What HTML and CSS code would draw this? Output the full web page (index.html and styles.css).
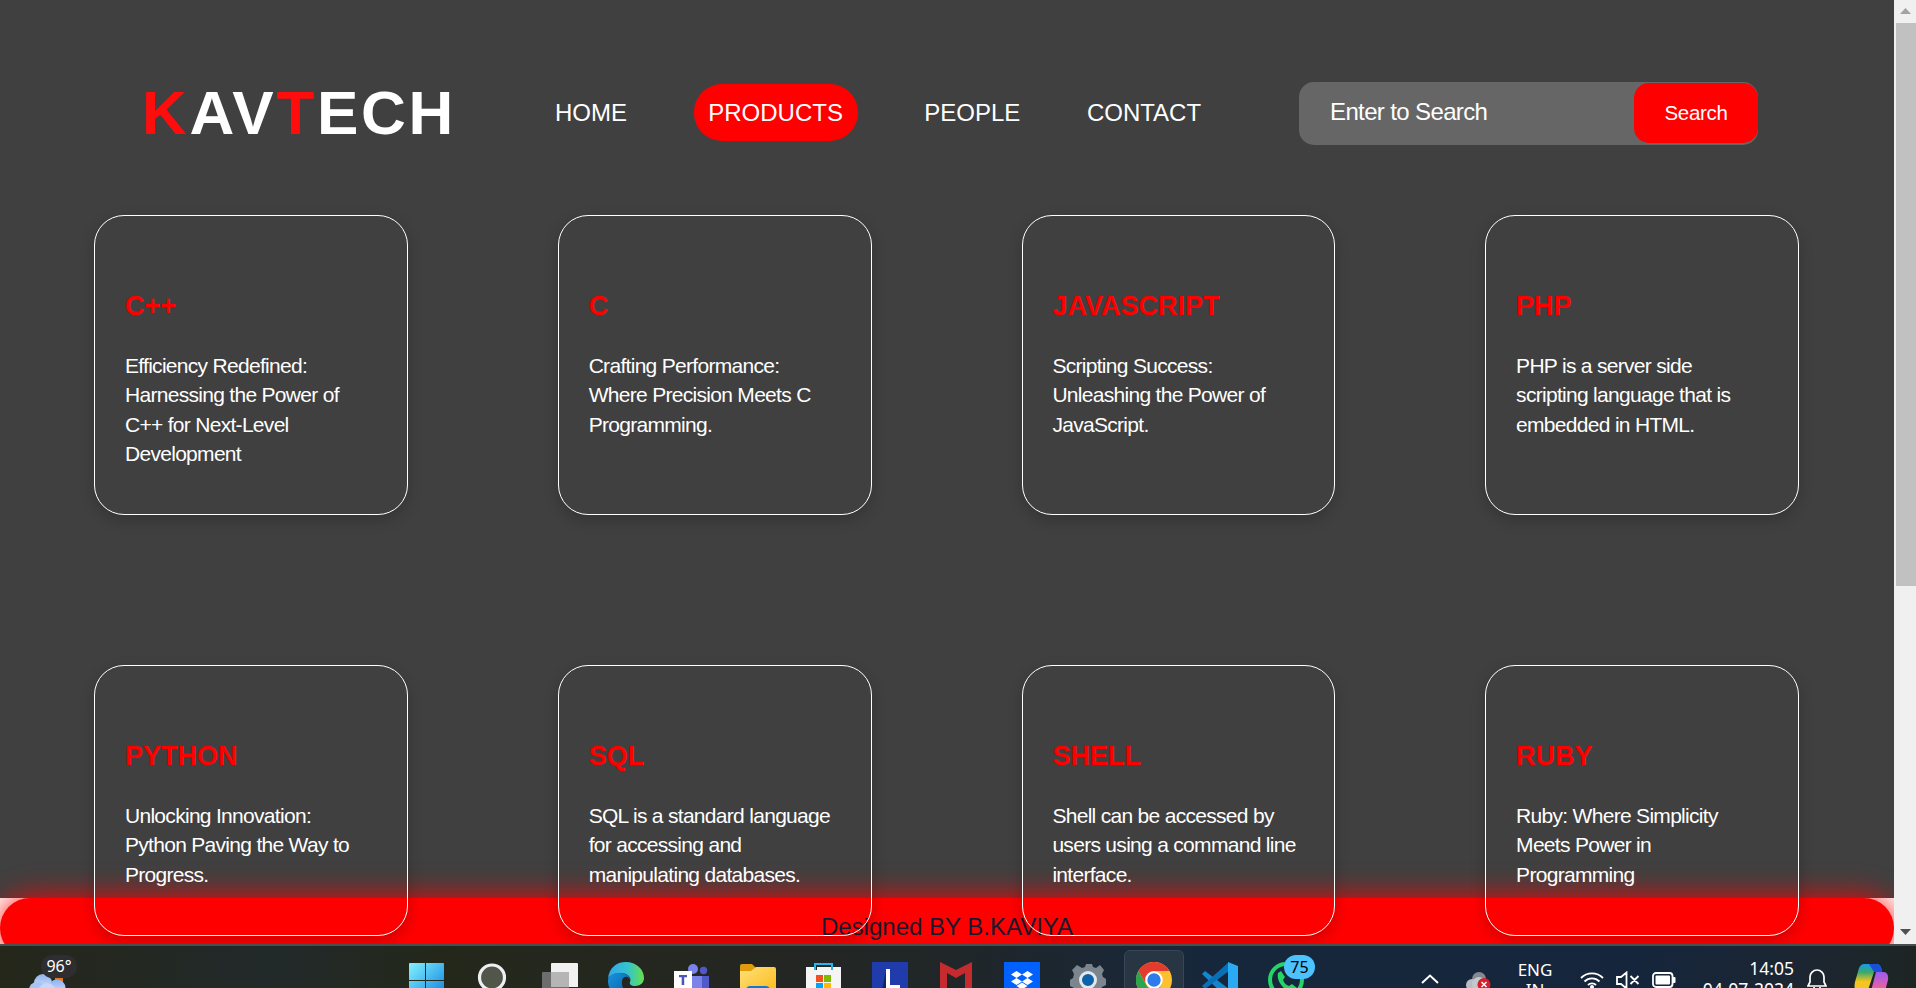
FILE: index.html
```html
<!DOCTYPE html>
<html lang="en">
<head>
<meta charset="utf-8">
<title>KAVTECH</title>
<link rel="stylesheet" href="styles.css">
</head>
<body>
<div class="browser">
  <div class="page">
    <main class="content">
      <header class="header">
        <div class="logo"><span class="logo-accent">K</span>AV<span class="logo-accent">T</span>ECH</div>
        <nav class="nav">
          <a class="nav-link">HOME</a>
          <a class="nav-link active">PRODUCTS</a>
          <a class="nav-link">PEOPLE</a>
          <a class="nav-link">CONTACT</a>
        </nav>
        <div class="search">
          <span class="search-field">Enter to Search</span>
          <span class="search-button">Search</span>
        </div>
      </header>
      <section class="cards">
        <article class="card"><h2>C++</h2><p>Efficiency Redefined:<br>Harnessing the Power of<br>C++ for Next-Level<br>Development</p></article>
        <article class="card"><h2>C</h2><p>Crafting Performance:<br>Where Precision Meets C<br>Programming.</p></article>
        <article class="card"><h2>JAVASCRIPT</h2><p>Scripting Success:<br>Unleashing the Power of<br>JavaScript.</p></article>
        <article class="card"><h2>PHP</h2><p>PHP is a server side<br>scripting language that is<br>embedded in HTML.</p></article>
        <article class="card"><h2>PYTHON</h2><p>Unlocking Innovation:<br>Python Paving the Way to<br>Progress.</p></article>
        <article class="card"><h2>SQL</h2><p>SQL is a standard language<br>for accessing and<br>manipulating databases.</p></article>
        <article class="card"><h2>SHELL</h2><p>Shell can be accessed by<br>users using a command line<br>interface.</p></article>
        <article class="card"><h2>RUBY</h2><p>Ruby: Where Simplicity<br>Meets Power in<br>Programming</p></article>
      </section>
    </main>
    <footer class="footer"><span>Designed BY B.KAVIYA</span></footer>
  </div>
  <div class="scrollbar">
    <svg class="arrow" width="11" height="6" viewBox="0 0 11 6"><path d="M5.5 0 11 6H0z" fill="#a3a3a3"/></svg>
    <div class="thumb"></div>
    <svg class="arrow arrow-down" width="11" height="6" viewBox="0 0 11 6"><path d="M5.5 6 11 0H0z" fill="#505050"/></svg>
  </div>
</div>
<div class="taskbar">
  <div class="weather">
    <svg width="40" height="22" viewBox="0 0 40 22"><defs><linearGradient id="cl" x2="0" y2="1"><stop offset="0" stop-color="#8fb2f0"/><stop offset="1" stop-color="#dbe7fb"/></linearGradient></defs><path d="M26 2h8v8h-8z" fill="#e8741e"/><circle cx="14" cy="10" r="9" fill="url(#cl)"/><circle cx="8" cy="17" r="8" fill="#a9c3f3"/><circle cx="28" cy="15" r="8.500" fill="url(#cl)"/><circle cx="18" cy="19" r="9" fill="#c5d8f8"/></svg>
    <span class="temp">96°</span>
  </div>
  <div class="apps">
    <svg class="app app-start" viewBox="0 0 36 36"><defs><linearGradient id="win" x2="1" y2="1"><stop offset="0" stop-color="#84f3ff"/><stop offset="1" stop-color="#0a7fe0"/></linearGradient></defs><path d="M0 2q0-1 1-1h15v17H0zM17 1h17q1 0 1 1v16H17zM0 19h16v17H0zM17 19h18v17H17z" fill="url(#win)"/></svg>
    <svg class="app" viewBox="0 0 36 36"><circle cx="16" cy="15.500" r="12.500" fill="#50564a" stroke="#eef0f3" stroke-width="3.200"/></svg>
    <svg class="app" viewBox="0 0 36 36"><path d="M9 2a1 1 0 0 1 1-1h25a1 1 0 0 1 1 1v23H9z" fill="#f1f1f1"/><path d="M0 11a1 1 0 0 1 1-1h26v26H0z" fill="#6d6d6d"/><path d="M9 10h18v15H9z" fill="#b5b5b5"/></svg>
    <svg class="app" viewBox="0 0 36 36"><defs><linearGradient id="ed" x2="1"><stop offset="0" stop-color="#31a8ea"/><stop offset=".55" stop-color="#35c3cf"/><stop offset="1" stop-color="#66e047"/></linearGradient><linearGradient id="ed2" x2="1" y2="1"><stop offset="0" stop-color="#1795dd"/><stop offset="1" stop-color="#0c59a4"/></linearGradient></defs><path d="M0 17C1 6 8 0 18 0c10 0 18 7 18 16 0 5-4 8-9 8-4 0-6-2-5-4 2-5-3-9-9-9C6 11 1 14 0 17z" fill="url(#ed)"/><path d="M0 18C1 13 7 10 13 11c5 0 9 3 9 7-1-4-7-5-8 1-1 6 3 12 8 15-10 5-23-4-22-16z" fill="url(#ed2)"/></svg>
    <svg class="app" viewBox="0 0 36 36"><circle cx="19" cy="7" r="5" fill="#7b83eb"/><circle cx="29.500" cy="8.500" r="3.700" fill="#5059c9"/><path d="M24 14h11v14H24z" fill="#5059c9"/><path d="M12 14h16v22H12z" fill="#7b83eb"/><path d="M0 9h18v19H0z" fill="#fff"/><path d="M5 13h8v2.300h-2.800V23H7.700v-7.700H5z" fill="#4b53bc"/></svg>
    <svg class="app" viewBox="0 0 36 36"><defs><linearGradient id="fo" x2="1" y2="1"><stop offset="0" stop-color="#ffe07a"/><stop offset="1" stop-color="#fbb915"/></linearGradient></defs><path d="M0 4q0-2 2-2h10l4 4v8H0z" fill="#df9b0b"/><path d="M0 9h11l5-4h18q2 0 2 2v26H0z" fill="url(#fo)"/><path d="M6 27q1-3 4-3h16q3 0 4 3v7H6z" fill="#1378c9"/></svg>
    <svg class="app" viewBox="0 0 36 36"><path d="M9 8V2h17v6" fill="none" stroke="#29b6ec" stroke-width="2"/><path d="M0 5h8v3h3V5h14v3h2V5h8v31H0z" fill="#f5f5f5"/><path d="M10 13h7v7h-7z" fill="#f25022"/><path d="M18 13h7v7h-7z" fill="#7fba00"/><path d="M10 21h7v7h-7z" fill="#00a4ef"/><path d="M18 21h7v7h-7z" fill="#ffb900"/></svg>
    <svg class="app" viewBox="0 0 36 36"><path d="M0 0h36v36H0z" fill="#1f3bac"/><path d="M14 8v20h-4z" fill="#0c2a5c"/><path d="M14 7h4v16h10v5H14z" fill="#fff"/></svg>
    <svg class="app" viewBox="0 0 36 36"><path d="M2 0l16 8 16-8v36h-7V11l-9 5-9-5v25H2z" fill="#c42a2e"/></svg>
    <svg class="app" viewBox="0 0 36 36"><path d="M0 0h36v36H0z" fill="#0061fe"/><path d="M12.500 9l5.500 3.500-5.500 3.500L7 12.500zM23.500 9l5.500 3.500-5.500 3.500-5.500-3.500zM12.500 16l5.500 3.500-5.500 3.500L7 19.500zM23.500 16l5.500 3.500-5.500 3.500-5.500-3.500zM18 20.500l5.500 3.500-5.500 3.500-5.500-3.500z" fill="#fff"/></svg>
    <svg class="app" viewBox="0 0 36 36"><path d="M7 2l5 3 3-1 1-3h6l1 3 3 1 4-3 4 5-2 4 1 3 3 2v6l-4 2-3 6-4 4H9l-5-9-4-2v-6l3-2 1-4-2-4z" transform="translate(0 1)" fill="#7b858e"/><circle cx="18" cy="18" r="7.500" fill="#0c62ab" stroke="#e4e8ea" stroke-width="3"/></svg>
    <div class="app-active">
      <svg class="app" viewBox="0 0 36 36"><circle cx="18" cy="18" r="18" fill="#fdc02f"/><path d="M2.400 9A18 18 0 0 1 33.600 9H18a9 9 0 0 0-8 13z" fill="#e33b2e"/><path d="M2.400 9A18 18 0 0 0 18 36l8-13.500a9 9 0 0 1-16 0z" fill="#2da44e"/><circle cx="18" cy="18" r="7.700" fill="#2f7bea" stroke="#fff" stroke-width="2"/></svg>
    </div>
    <svg class="app" viewBox="0 0 36 36"><path d="M0 12l3-3 24 18v8L24 35z" fill="#1287d0"/><path d="M0 24l3 3L27 9V0z" fill="#0a70b5"/><path d="M26 0l10 4v28l-10 4z" fill="#2aaaf2"/></svg>
    <div class="app whatsapp">
      <svg class="app" viewBox="0 0 36 36"><circle cx="18" cy="18" r="16" fill="none" stroke="#25d366" stroke-width="4"/><path d="M10 11l3-2 4 6-2 3c1 3 3 5 6 6l3-2 5 4-3 4c-9 0-18-10-16-19z" fill="#25d366"/></svg>
      <span class="badge">75</span>
    </div>
  </div>
  <div class="tray">
    <svg class="t-up" width="18" height="10" viewBox="0 0 18 10"><path d="M1 9l8-7.500L17 9" fill="none" stroke="#fff" stroke-width="2"/></svg>
    <svg class="t-cloud" width="26" height="18" viewBox="0 0 26 18"><circle cx="13" cy="7" r="7" fill="#84898f"/><circle cx="6" cy="13" r="6" fill="#b9bdc3"/><circle cx="13" cy="12" r="7" fill="#c4c8cd"/><circle cx="18" cy="12.500" r="6.500" fill="#d51f2d"/><path d="M15.500 10l5 5m0-5l-5 5" stroke="#fff" stroke-width="1.500"/></svg>
    <div class="lang">ENG<br>IN</div>
    <svg class="t-wifi" width="24" height="18" viewBox="0 0 24 18" fill="none" stroke="#fff" stroke-width="1.800"><path d="M1 7a15.500 15.500 0 0 1 22 0M4.500 10.500a10.500 10.500 0 0 1 15 0M8 14a5.700 5.700 0 0 1 8 0"/><circle cx="12" cy="16" r="2" fill="#fff" stroke="none"/></svg>
    <svg class="t-mute" width="24" height="18" viewBox="0 0 24 18" fill="none" stroke="#fff" stroke-width="1.800"><path d="M1 6h4l5.500-4.500v16L5 13H1zM14.500 5l8 8m0-8l-8 8"/></svg>
    <svg class="t-batt" width="24" height="16" viewBox="0 0 24 16"><rect x="1" y="1" width="19.500" height="14" rx="3" fill="none" stroke="#fff" stroke-width="1.800"/><rect x="3.500" y="3.500" width="14.500" height="9" rx="1" fill="#fff"/><path d="M21 5h1.500q1 0 1 1v4q0 1-1 1H21z" fill="#fff"/></svg>
    <div class="clock">14:05<br>04-07-2024</div>
    <svg class="t-bell" width="20" height="20" viewBox="0 0 20 20" fill="none" stroke="#fff" stroke-width="1.700"><path d="M3 13V8a7 7 0 0 1 14 0v5l2 4H1zM7 18a3 3 0 0 0 6 0"/></svg>
    <svg class="t-copilot" width="36" height="36" viewBox="0 0 36 36"><defs><linearGradient id="ca" x2="0" y2="1"><stop offset="0" stop-color="#189be8"/><stop offset=".3" stop-color="#39a86d"/><stop offset=".65" stop-color="#f5c41e"/></linearGradient><linearGradient id="cb" x2="0" y2="1"><stop offset="0" stop-color="#9a5cf0"/><stop offset=".6" stop-color="#f0609e"/></linearGradient></defs><path d="M10 0h13q4 0 5 8h-8l-5 15q-1 4-5 4H5q-6 0-4-9L5 4q2-4 5-4z" fill="url(#ca)"/><path d="M15 0h8q4 0 5 8h-8z" fill="#1b4fd6"/><path d="M22 8h7q6 0 5 8l-4 15q-2 5-6 5H12q4 0 5-9z" fill="url(#cb)"/></svg>
  </div>
</div>
</body>
</html>
```

FILE: styles.css
```css
* { box-sizing: border-box; }

body {
  margin: 0;
  height: 988px;
  overflow: hidden;
  display: flex;
  flex-direction: column;
  font-family: "Liberation Sans", Arial, sans-serif;
  color: #fff;
  background: #fff;
}

.browser {
  display: flex;
  height: 944px;
  flex: none;
  overflow: hidden;
}

.page {
  width: 1894px;
  height: 944px;
  overflow: hidden;
  background: #fff;
}

.content {
  height: 898px;
  background: #404040;
}

.header {
  height: 215px;
  padding: 82px 136px 0 142px;
  display: flex;
  align-items: flex-start;
}

.logo {
  width: 413px;
  margin-top: -4px;
  font-size: 62px;
  line-height: 70px;
  font-weight: 700;
  letter-spacing: 2.7px;
  white-space: nowrap;
}

.logo-accent { color: #ff0d0d; }

.nav {
  display: flex;
  gap: 66.6px;
  margin-top: 2px;
}

.nav-link {
  height: 57px;
  line-height: 57px;
  font-size: 24px;
  white-space: nowrap;
}

.active {
  padding: 0 14.7px;
  border-radius: 28px;
  background: #f00;
}

.search {
  margin-left: auto;
  width: 459px;
  height: 63px;
  display: flex;
  padding-top: 1px;
  background: #666;
  border-radius: 15px;
}

.search-field {
  flex: 1;
  padding-left: 31px;
  font-size: 24px;
  line-height: 58px;
  letter-spacing: -0.63px;
}

.search-button {
  width: 124px;
  height: 60px;
  background: #f00;
  border-radius: 15px;
  text-align: center;
  font-size: 20.5px;
  line-height: 60px;
  letter-spacing: -0.3px;
}

.cards {
  position: relative;
  z-index: 1;
  display: grid;
  grid-template-columns: repeat(4, 313.6px);
  grid-template-rows: 300px 271px;
  justify-content: space-between;
  row-gap: 150px;
  padding: 0 95px 0 94.25px;
}

.card {
  border: 1px solid #fff;
  border-radius: 30px;
  padding: 72px 20px 0 29.7px;
  box-shadow: 0 5px 15px rgba(0, 0, 0, 0.2);
  white-space: nowrap;
}

.card h2 {
  margin: 0;
  color: #f00;
  font-size: 27px;
  line-height: 36px;
}

.card p {
  margin: 27px 0 0;
  font-size: 21px;
  line-height: 29.4px;
  letter-spacing: -0.7px;
}

.footer {
  width: 1894px;
  height: 60px;
  background: #f00;
  border-radius: 30px;
  box-shadow: 0 0 30px #f00;
  text-align: center;
  font-size: 24px;
  line-height: 58px;
  color: #1a1a2e;
}

.scrollbar {
  width: 22px;
  display: flex;
  flex-direction: column;
  align-items: center;
  background: #f0f0f0;
  padding: 8px 0 9px 2px;
}

.arrow { display: block; margin-right: 1px; }
.arrow-down { margin-top: auto; }

.thumb {
  width: 20px;
  height: 563px;
  margin-top: 9px;
  background: #c1c1c1;
}

.taskbar {
  height: 44px;
  flex: none;
  display: flex;
  overflow: hidden;
  border-top: 2px solid #48504f;
  background: linear-gradient(90deg, #24271a, #22292a 270px, #24281b 440px, #252622 750px, #202629 960px, #17273b 1200px, #15253b 1640px, #1c2632 1800px, #1d2523 1916px);
  font-family: "Noto Sans", sans-serif;
}

.weather {
  position: relative;
  width: 410px;
  flex: none;
  padding: 27px 0 0 29px;
}

.temp {
  position: absolute;
  left: 41px;
  top: 9px;
  width: 36px;
  height: 23px;
  border-radius: 12px;
  background: #2e2e30;
  font-size: 16px;
  line-height: 23px;
  text-align: center;
}

.apps {
  display: flex;
  gap: 30px;
  padding-top: 16px;
  width: 1012px;
  flex: none;
}

.app {
  width: 36px;
  height: 36px;
  flex: none;
  display: block;
}

.app-start { margin: 0 1px 0 -1px; }

.app-active {
  margin: -12px -12px 0;
  padding: 11px 11px 0;
  width: 60px;
  height: 60px;
  flex: none;
  border: 1px solid #3a4655;
  border-radius: 6px;
  background: #283543;
}

.whatsapp { position: relative; }

.badge {
  position: absolute;
  left: 16px;
  top: -7px;
  width: 31px;
  height: 24px;
  border-radius: 12px;
  background: #4cc2ff;
  color: #000;
  font-size: 16px;
  line-height: 24px;
  text-align: center;
}

.tray {
  display: flex;
  align-items: flex-start;
  font-size: 17px;
  line-height: 20px;
}

.tray svg { flex: none; display: block; }
.t-up { margin: 28px 26px 0 -1px; }
.t-cloud { margin: 26px 0 0 1px; }

.lang {
  width: 86px;
  margin-right: 2px;
  padding-top: 14px;
  text-align: center;
}

.t-wifi { margin: 25px 0 0; }
.t-mute { margin: 25px 0 0 12px; }
.t-batt { margin: 26px 0 0 12px; }

.clock {
  width: 118px;
  padding-top: 12px;
  margin-right: -1px;
  font-size: 17.5px;
  line-height: 20.5px;
  text-align: right;
}

.t-bell { margin: 23px 0 0 14px; }
.t-copilot { margin: 18px 0 0 27px; }
```
